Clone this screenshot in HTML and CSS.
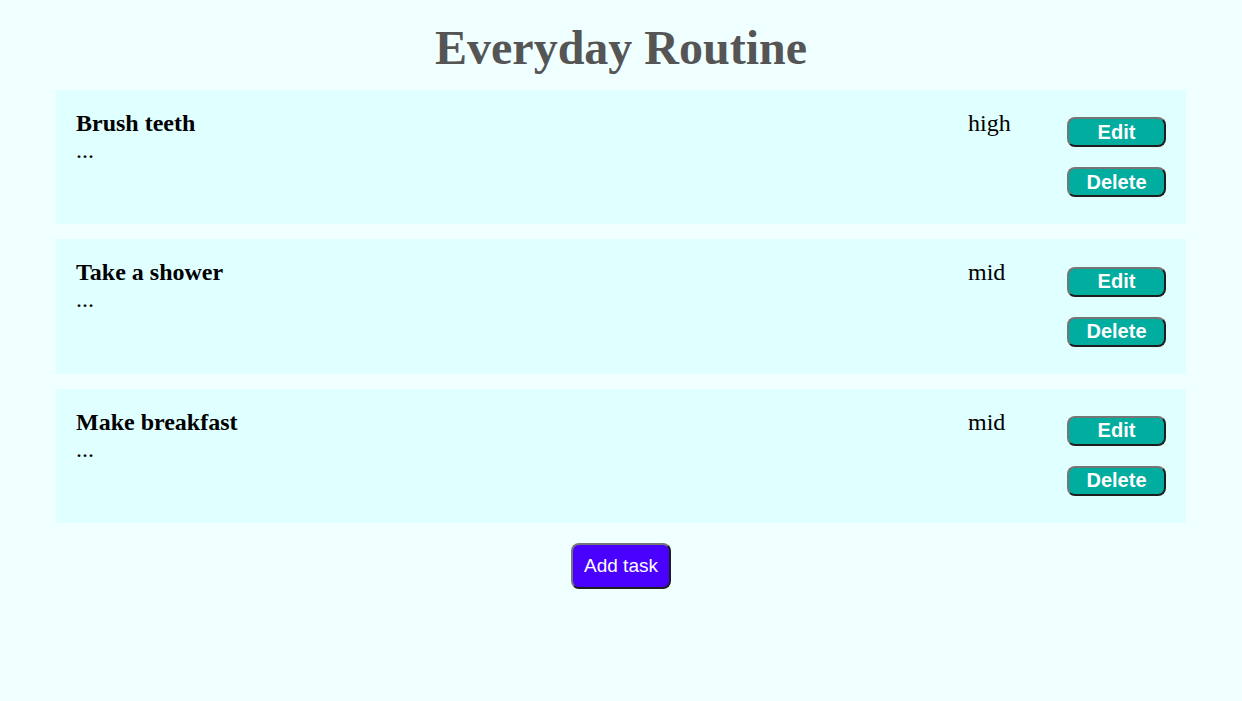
FILE: index.html
```html
<!DOCTYPE html>
<html>
<head>
<meta charset="utf-8">
<link rel="stylesheet" href="styles.css">
<title>Everyday Routine</title>
</head>
<body>
<h1 class="title">Everyday Routine</h1>
<div class="tasks">
  <div class="task">
    <div class="task-main">
      <h3 class="task-name">Brush teeth</h3>
      <p class="task-desc">...</p>
    </div>
    <div class="task-priority">high</div>
    <div class="task-actions">
      <button class="btn-action">Edit</button>
      <button class="btn-action">Delete</button>
    </div>
  </div>
  <div class="task">
    <div class="task-main">
      <h3 class="task-name">Take a shower</h3>
      <p class="task-desc">...</p>
    </div>
    <div class="task-priority">mid</div>
    <div class="task-actions">
      <button class="btn-action">Edit</button>
      <button class="btn-action">Delete</button>
    </div>
  </div>
  <div class="task">
    <div class="task-main">
      <h3 class="task-name">Make breakfast</h3>
      <p class="task-desc">...</p>
    </div>
    <div class="task-priority">mid</div>
    <div class="task-actions">
      <button class="btn-action">Edit</button>
      <button class="btn-action">Delete</button>
    </div>
  </div>
</div>
<div class="add-row">
  <button class="btn-add">Add task</button>
</div>
</body>
</html>
```
FILE: styles.css
```css
html, body {
  margin: 0;
  padding: 0;
  background: #f0ffff;
  font-family: "Liberation Serif", "Times New Roman", serif;
}
body {
  min-height: 701px;
}
.title {
  margin: 20px 0 15px;
  text-align: center;
  font-size: 48px;
  font-weight: bold;
  color: #555555;
  line-height: 55px;
}
.tasks {
  width: 1130px;
  margin: 0 auto;
  display: flex;
  flex-direction: column;
  gap: 15px;
}
.task {
  background: #e0ffff;
  padding: 20px;
  display: flex;
  align-items: flex-start;
}
.task-main {
  flex: 1;
}
.task-name {
  margin: 0;
  font-size: 24px;
  line-height: 27px;
  font-weight: bold;
  color: #000;
}
.task-desc {
  margin: 0;
  font-size: 24px;
  line-height: 27px;
  color: #000;
}
.task-priority {
  width: 99px;
  font-size: 24px;
  line-height: 27px;
  color: #000;
}
.task-actions {
  display: flex;
  flex-direction: column;
  gap: 20px;
  padding: 7.2px 0;
}
.btn-action {
  width: 99px;
  height: 30px;
  padding: 0;
  background: #00ad9f;
  color: #ffffff;
  font-family: "Liberation Sans", Arial, sans-serif;
  font-weight: bold;
  font-size: 20px;
  border: 2px solid;
  border-color: #767676 #1e1e1e #1e1e1e #767676;
  border-radius: 8px;
  cursor: pointer;
}
.add-row {
  display: flex;
  justify-content: center;
  margin-top: 20px;
}
.btn-add {
  width: 99.5px;
  height: 46px;
  padding: 0;
  background: #4a00ff;
  color: #ffffff;
  font-family: "Liberation Sans", Arial, sans-serif;
  font-size: 19px;
  border: 2px solid;
  border-color: #767676 #1e1e1e #1e1e1e #767676;
  border-radius: 8px;
  cursor: pointer;
}
```
